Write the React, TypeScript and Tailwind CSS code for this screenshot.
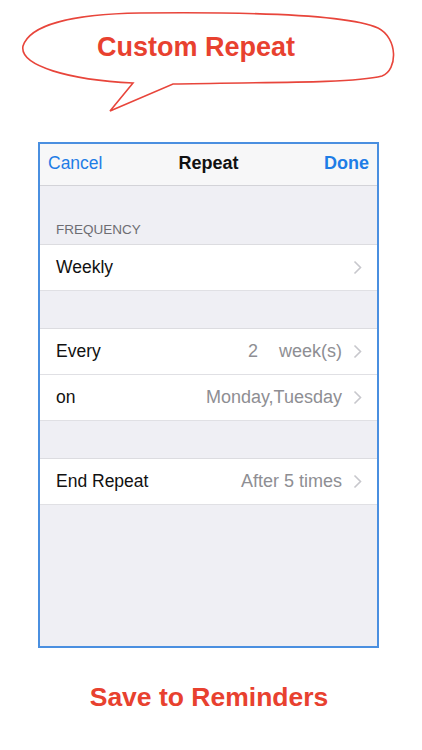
import React from "react";

const FONT = { fontFamily: '"Liberation Sans", Arial, Helvetica, sans-serif' };

function Chevron() {
  return (
    <svg width="9" height="15" viewBox="0 0 9 15" className="ml-[11px] shrink-0">
      <path d="M1.5 1.5 L7.5 7.5 L1.5 13.5" fill="none" stroke="#c7c7cc" strokeWidth="1.6" />
    </svg>
  );
}

function Row({
  label,
  value,
  border,
}: {
  label: string;
  value?: React.ReactNode;
  border?: boolean;
}) {
  return (
    <div className={`h-[46px] flex items-center bg-white pl-[16px] pr-[15px] ${border ? "border-b border-[#e0e0e4]" : ""}`}>
      <span className="text-[17.5px] text-[#111]">{label}</span>
      <div className="flex-1 flex justify-end text-[18px] text-[#8e8e93]">{value}</div>
      <Chevron />
    </div>
  );
}

function Bubble() {
  return (
    <div className="relative h-[120px]">
      <svg width="422" height="120" viewBox="0 0 422 120" className="absolute inset-0">
        <path
          d="M133 83 L110 111 L173 84 C250 82 350 84 382 76 C398 70 398 38 378 28 C345 13 230 12 140 13 C75 14 30 24 23 46 C19 66 70 80 133 83 Z"
          fill="#fff"
          stroke="#e8453b"
          strokeWidth="1.6"
          strokeLinejoin="miter"
        />
      </svg>
      <div className="relative pt-[31px] pl-[97px] text-[27px] font-bold text-[#e8412f] leading-[32px]">
        Custom Repeat
      </div>
    </div>
  );
}

export default function App() {
  return (
    <div className="w-[422px] h-[750px] bg-white overflow-hidden" style={FONT}>
      <Bubble />

      <div className="mt-[22px] ml-[38px] w-[341px] h-[506px] border-2 border-[#4a8fe0] bg-[#efeff4] flex flex-col">
        {/* nav bar */}
        <div className="h-[42px] bg-[#f7f7f8] border-b border-[#d3d3d8] flex items-center justify-between px-[8px] pb-[3px] relative">
          <span className="text-[17.5px] text-[#1f7de6]">Cancel</span>
          <span className="absolute left-0 right-0 text-center text-[18px] font-bold text-[#111] pointer-events-none">
            Repeat
          </span>
          <span className="text-[18px] font-bold text-[#1f7de6]">Done</span>
        </div>

        <div className="h-[58px] flex items-end pl-[16px] pb-[8px]">
          <span className="text-[13.5px] text-[#6d6d72] leading-none">FREQUENCY</span>
        </div>
        <div className="border-t border-[#dcdce0]">
          <Row label="Weekly" border />
        </div>

        <div className="h-[37px]" />
        <div className="border-t border-[#dcdce0]">
          <Row
            label="Every"
            border
            value={
              <>
                <span>2</span>
                <span className="ml-[21px]">week(s)</span>
              </>
            }
          />
          <Row label="on" border value="Monday,Tuesday" />
        </div>

        <div className="h-[37px]" />
        <div className="border-t border-[#dcdce0]">
          <Row label="End Repeat" border value="After 5 times" />
        </div>
      </div>

      <div className="mt-[33px] text-center pr-[4px] text-[26.5px] font-bold text-[#e8412f] leading-[32px]">
        Save to Reminders
      </div>
    </div>
  );
}
